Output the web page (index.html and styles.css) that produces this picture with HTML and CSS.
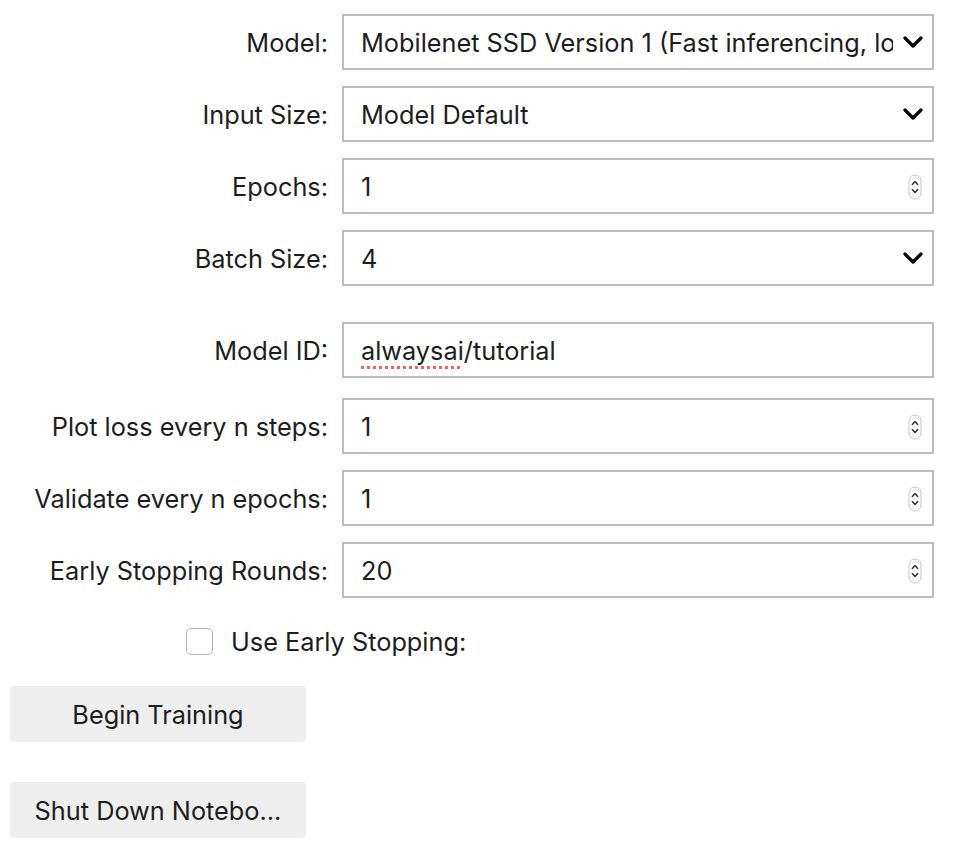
FILE: index.html
```html
<!DOCTYPE html>
<html>
<head>
<meta charset="utf-8">
<link rel="stylesheet" href="styles.css">
</head>
<body>
<div class="form">
  <div class="row">
    <div class="lbl">Model:</div>
    <div class="field">
      <span class="val clip">Mobilenet SSD Version 1 (Fast inferencing, lower accuracy)</span>
      <svg class="chev" width="20" height="12" viewBox="0 0 20 12"><polyline points="2,2 10,10 18,2" fill="none" stroke="#000" stroke-width="3.2" stroke-linecap="round" stroke-linejoin="round"/></svg>
    </div>
  </div>
  <div class="row">
    <div class="lbl">Input Size:</div>
    <div class="field">
      <span class="val clip">Model Default</span>
      <svg class="chev" width="20" height="12" viewBox="0 0 20 12"><polyline points="2,2 10,10 18,2" fill="none" stroke="#000" stroke-width="3.2" stroke-linecap="round" stroke-linejoin="round"/></svg>
    </div>
  </div>
  <div class="row">
    <div class="lbl">Epochs:</div>
    <div class="field">
      <span class="val">1</span>
      <svg class="spin" width="14" height="26" viewBox="0 0 14 26"><rect x="1" y="1" width="12" height="24" rx="6" fill="#fff" stroke="#c4c4c4" stroke-width="1"/><polyline points="4.3,10.5 7,7.5 9.7,10.5" fill="none" stroke="#333" stroke-width="1.5" stroke-linecap="round" stroke-linejoin="round"/><polyline points="4.3,15.5 7,18.5 9.7,15.5" fill="none" stroke="#333" stroke-width="1.5" stroke-linecap="round" stroke-linejoin="round"/></svg>
    </div>
  </div>
  <div class="row">
    <div class="lbl">Batch Size:</div>
    <div class="field">
      <span class="val clip">4</span>
      <svg class="chev" width="20" height="12" viewBox="0 0 20 12"><polyline points="2,2 10,10 18,2" fill="none" stroke="#000" stroke-width="3.2" stroke-linecap="round" stroke-linejoin="round"/></svg>
    </div>
  </div>
  <div class="row row-gap-lg">
    <div class="lbl">Model ID:</div>
    <div class="field">
      <span class="val"><span class="spell">alwaysai</span>/tutorial</span>
    </div>
  </div>
  <div class="row row-gap-sm">
    <div class="lbl">Plot loss every n steps:</div>
    <div class="field">
      <span class="val">1</span>
      <svg class="spin" width="14" height="26" viewBox="0 0 14 26"><rect x="1" y="1" width="12" height="24" rx="6" fill="#fff" stroke="#c4c4c4" stroke-width="1"/><polyline points="4.3,10.5 7,7.5 9.7,10.5" fill="none" stroke="#333" stroke-width="1.5" stroke-linecap="round" stroke-linejoin="round"/><polyline points="4.3,15.5 7,18.5 9.7,15.5" fill="none" stroke="#333" stroke-width="1.5" stroke-linecap="round" stroke-linejoin="round"/></svg>
    </div>
  </div>
  <div class="row">
    <div class="lbl">Validate every n epochs:</div>
    <div class="field">
      <span class="val">1</span>
      <svg class="spin" width="14" height="26" viewBox="0 0 14 26"><rect x="1" y="1" width="12" height="24" rx="6" fill="#fff" stroke="#c4c4c4" stroke-width="1"/><polyline points="4.3,10.5 7,7.5 9.7,10.5" fill="none" stroke="#333" stroke-width="1.5" stroke-linecap="round" stroke-linejoin="round"/><polyline points="4.3,15.5 7,18.5 9.7,15.5" fill="none" stroke="#333" stroke-width="1.5" stroke-linecap="round" stroke-linejoin="round"/></svg>
    </div>
  </div>
  <div class="row">
    <div class="lbl">Early Stopping Rounds:</div>
    <div class="field">
      <span class="val">20</span>
      <svg class="spin" width="14" height="26" viewBox="0 0 14 26"><rect x="1" y="1" width="12" height="24" rx="6" fill="#fff" stroke="#c4c4c4" stroke-width="1"/><polyline points="4.3,10.5 7,7.5 9.7,10.5" fill="none" stroke="#333" stroke-width="1.5" stroke-linecap="round" stroke-linejoin="round"/><polyline points="4.3,15.5 7,18.5 9.7,15.5" fill="none" stroke="#333" stroke-width="1.5" stroke-linecap="round" stroke-linejoin="round"/></svg>
    </div>
  </div>
  <div class="check-row">
    <span class="box"></span>
    <span class="check-text">Use Early Stopping:</span>
  </div>
  <button class="btn btn-first">Begin Training</button>
  <button class="btn btn-second">Shut Down Notebo...</button>
</div>
</body>
</html>
```
FILE: styles.css
```css
html, body {
  margin: 0;
  padding: 0;
  background: #fff;
}
body {
  font-family: Inter, "Liberation Sans", sans-serif;
  font-size: 25.3px;
  color: #1d1d1d;
}
.form {
  padding: 14px 0 0 10px;
  display: flex;
  flex-direction: column;
  align-items: flex-start;
}
.row {
  display: flex;
  align-items: center;
  height: 56px;
  margin-bottom: 16px;
}
.row-gap-lg {
  margin-top: 20px;
}
.row-gap-sm {
  margin-top: 4px;
}
.lbl {
  width: 318px;
  margin-right: 14px;
  text-align: right;
  white-space: nowrap;
}
.field {
  box-sizing: border-box;
  width: 592px;
  height: 56px;
  border: 2px solid #bdbdbd;
  padding: 0 9px 0 17px;
  display: flex;
  align-items: center;
  justify-content: space-between;
  background: #fff;
}
.val {
  white-space: nowrap;
}
.clip {
  overflow: hidden;
  width: 532px;
}
.spell {
  text-decoration: underline dotted #f0645a;
  text-decoration-thickness: 3px;
  text-underline-offset: 6px;
}
.chev {
  flex: none;
}
.spin {
  flex: none;
  margin-top: 2px;
  margin-right: 1px;
}
.check-row {
  display: flex;
  align-items: center;
  height: 56px;
  margin-top: -1px;
  padding-left: 176px;
}
.box {
  box-sizing: border-box;
  width: 27px;
  height: 27px;
  border: 1.5px solid #b5b5b5;
  border-radius: 5px;
  background: #fff;
  margin-right: 18px;
}
.btn {
  font-family: inherit;
  font-size: 25.3px;
  color: #1d1d1d;
  width: 296px;
  height: 56px;
  border: none;
  border-radius: 4px;
  background: #eeeeee;
  padding: 0;
}
.btn-first {
  margin-top: 17px;
}
.btn-second {
  margin-top: 40px;
}
```
